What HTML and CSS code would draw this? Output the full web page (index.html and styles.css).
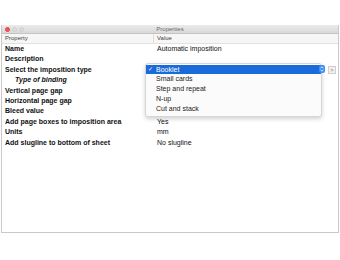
FILE: index.html
```html
<!DOCTYPE html>
<html>
  <head>
    <meta charset="UTF-8" />
    <title>Properties</title>
    <link rel="stylesheet" href="styles.css">
  </head>
  <body>
    <div class="window">
      <div class="titlebar">
        <div class="lights">
          <span class="light red"></span>
          <span class="light"></span>
          <span class="light"></span>
        </div>
        <div class="title">Properties</div>
      </div>
      <div class="table">
        <div class="head">
          <div class="col-prop">Property</div>
          <div class="col-val">Value</div>
        </div>
        <div class="row"><div class="col-prop">Name</div><div class="col-val">Automatic imposition</div></div>
        <div class="row"><div class="col-prop">Description</div><div class="col-val"></div></div>
        <div class="row select-row">
          <div class="col-prop">Select the imposition type</div>
          <div class="col-val">
            <!-- menu opened over the rows -->
            <div class="popup">
              <div class="item selected"><span class="check">✓</span>Booklet</div>
              <div class="item">Small cards</div>
              <div class="item">Step and repeat</div>
              <div class="item">N-up</div>
              <div class="item">Cut and stack</div>
            </div>
            <span class="stepper">
              <svg width="4" height="6" viewBox="0 0 4 6"><path d="M0.5 2.3 L2 0.8 L3.5 2.3 M0.5 3.7 L2 5.2 L3.5 3.7" fill="none" stroke="#fff" stroke-width="0.8"/></svg>
            </span>
            <span class="more">&gt;</span>
          </div>
        </div>
        <div class="row"><div class="col-prop sub">Type of binding</div><div class="col-val"></div></div>
        <div class="row"><div class="col-prop">Vertical page gap</div><div class="col-val"></div></div>
        <div class="row"><div class="col-prop">Horizontal page gap</div><div class="col-val"></div></div>
        <div class="row"><div class="col-prop">Bleed value</div><div class="col-val"></div></div>
        <div class="row"><div class="col-prop">Add page boxes to imposition area</div><div class="col-val">Yes</div></div>
        <div class="row"><div class="col-prop">Units</div><div class="col-val">mm</div></div>
        <div class="row"><div class="col-prop">Add slugline to bottom of sheet</div><div class="col-val">No slugline</div></div>
      </div>
    </div>
  </body>
</html>
```

FILE: styles.css
```css
body {
  margin: 0;
  background: #fff;
  font-family: "Liberation Sans", Arial, sans-serif;
  font-size: 7px;
  color: #111;
}

/* Cửa sổ */
.window {
  margin: 25px 0 0 1px;
  width: 336px;
  height: 207px;
  border: 1px solid #c9c9c9;
  border-top: none;
  background: #fff;
}

.titlebar {
  position: relative;
  height: 8px;
  background: linear-gradient(#ebebeb, #d9d9d9);
  border-bottom: 1px solid #c4c4c4;
  display: flex;
  align-items: center;
  justify-content: center;
}

.lights {
  position: absolute;
  left: 3px;
  top: 1.5px;
  display: flex;
  gap: 2px;
}

.light {
  width: 5px;
  height: 5px;
  border-radius: 50%;
  background: #dcdcdc;
  border: 0.5px solid #cfcfcf;
  box-sizing: border-box;
}

.light.red {
  background: #f2545b;
  border-color: #e0444b;
}

.title {
  font-size: 6px;
  color: #6a6a6a;
}

/* Bảng thuộc tính */
.head,
.row {
  display: grid;
  grid-template-columns: 151px 1fr;
}

.head {
  height: 9px;
  line-height: 9px;
  font-size: 6px;
  color: #444;
  background: #f6f6f6;
  border-bottom: 1px solid #e2e2e2;
}

.head .col-val {
  border-left: 1px solid #dedede;
  padding-left: 3px;
}

.head .col-prop {
  padding-left: 3px;
}

.row {
  height: 10.4px;
  line-height: 10.4px;
}

.row .col-prop {
  font-weight: bold;
  padding-left: 3px;
  white-space: nowrap;
}

.row .col-prop.sub {
  font-style: italic;
  padding-left: 13px;
}

.row .col-val {
  padding-left: 4px;
  position: relative;
  white-space: nowrap;
}

/* Menu chọn kiểu */
.popup {
  position: absolute;
  left: -8px;
  top: -2px;
  width: 175px;
  padding: 1px 0 3px;
  background: #fbfbfb;
  border: 1px solid #d6d6d6;
  border-radius: 3px;
  box-shadow: 0 2px 4px rgba(0, 0, 0, 0.18);
  z-index: 2;
}

.item {
  height: 9.7px;
  line-height: 9.7px;
  padding-left: 10px;
  position: relative;
  color: #222;
}

.item.selected {
  background: #1b6ad9;
  color: #fff;
}

.check {
  position: absolute;
  left: 2px;
  font-size: 6px;
}

.stepper {
  position: absolute;
  left: 166px;
  top: 0.5px;
  width: 6px;
  height: 8px;
  border-radius: 2px;
  background: #3d8ef0;
  display: flex;
  align-items: center;
  justify-content: center;
  z-index: 3;
}

.more {
  position: absolute;
  left: 175px;
  top: 1px;
  width: 6px;
  height: 6px;
  line-height: 6px;
  font-size: 5px;
  text-align: center;
  color: #555;
  background: #f0f0f0;
  border: 0.5px solid #cfcfcf;
}
```
